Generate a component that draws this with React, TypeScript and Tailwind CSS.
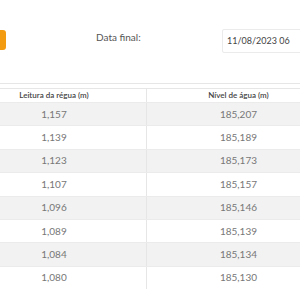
const rows = [
  { leitura: "1,157", nivel: "185,207" },
  { leitura: "1,139", nivel: "185,189" },
  { leitura: "1,123", nivel: "185,173" },
  { leitura: "1,107", nivel: "185,157" },
  { leitura: "1,096", nivel: "185,146" },
  { leitura: "1,089", nivel: "185,139" },
  { leitura: "1,084", nivel: "185,134" },
  { leitura: "1,080", nivel: "185,130" },
];

export default function App() {
  return (
    <div className="w-[300px] h-[300px] overflow-hidden bg-white font-['Lato',sans-serif] text-[#555]">
      <div className="flex items-start h-[84px] border-b border-[#e6e6e6]">
        <button className="shrink-0 mt-[30px] h-[20px] w-[6px] bg-[#f39c12] rounded-r-[3px]" aria-label="Filtrar" />
        <label className="shrink-0 ml-[90px] mt-[31px] w-[126px] text-[10px] leading-[12px] text-[#555]">
          Data final:
        </label>
        <div className="shrink-0 mt-[29px] h-[24px] w-[100px] border border-[#ebebeb] rounded-[2px] pl-[4px] flex items-center text-[9px] text-[#444]">
          11/08/2023 06
        </div>
      </div>

      <div className="mt-[4px] -ml-[38px] w-[368px] border-t border-[#e6e6e6]">
        <div className="grid grid-cols-2 h-[13px] text-[8px] font-semibold text-[#444] leading-[13px]">
          <div className="text-center">Leitura da régua (m)</div>
          <div className="text-center border-l border-[#e6e6e6]">Nível de água (m)</div>
        </div>
        {rows.map((r, i) => (
          <div
            key={r.leitura}
            className={
              i % 2 === 0
                ? "grid grid-cols-2 h-[23.4px] border-t border-[#ebebeb] bg-[#f2f2f2] text-[10px] text-[#777]"
                : "grid grid-cols-2 h-[23.4px] border-t border-[#ebebeb] bg-white text-[10px] text-[#777]"
            }
          >
            <div className="flex items-center justify-center">{r.leitura}</div>
            <div className="flex items-center justify-center border-l border-[#e6e6e6]">{r.nivel}</div>
          </div>
        ))}
      </div>
    </div>
  );
}
